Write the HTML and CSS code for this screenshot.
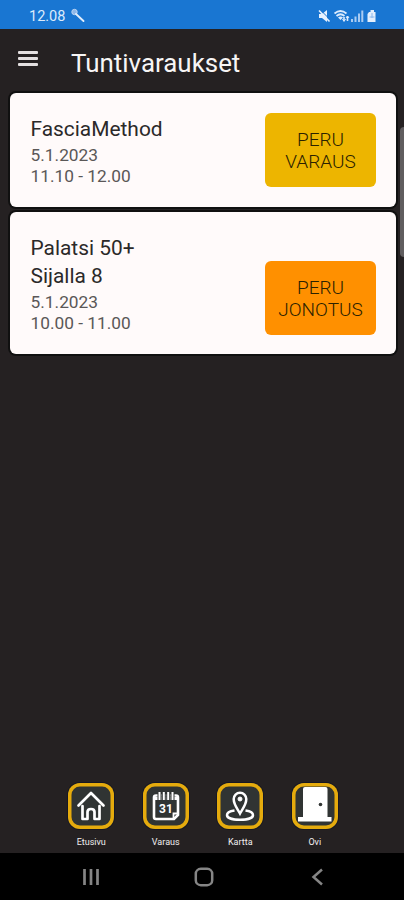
FILE: index.html
```html
<!DOCTYPE html>
<html lang="fi">
<head>
<meta charset="utf-8">
<title>Tuntivaraukset</title>
<link rel="stylesheet" href="styles.css">
</head>
<body>
<div class="phone">
  <div class="status">
    <span class="clock">12.08</span>
    <svg class="wand" width="16" height="16" viewBox="0 0 16 16"><circle cx="4.500" cy="4" r="2.700" fill="#8fb8e8" stroke="#b7d2f3"/><path d="M6 6l7.500 7" stroke="#e0edfc" stroke-width="1.900" stroke-linecap="round"/></svg>
    <svg class="signals" width="62" height="14" viewBox="0 0 62 14">
      <path d="M3 5h3l5-4v12L6 9H3z" fill="#e8f2ff"/><path d="M3.500 0l11 11" stroke="#1976d2" stroke-width="1"/><path d="M3 1.500l10.500 11" stroke="#e8f2ff" stroke-width="1.600"/>
      <path d="M18.500 4.500q6-5 12 0M20.500 7q4-3.500 8 0" fill="none" stroke="#dcebfd" stroke-width="1.700"/><path d="M22 8.500q2.500-2 5 0L24.500 11z" fill="#dcebfd"/><path d="M28 8v4M31.500 7v5" stroke="#dcebfd" stroke-width="1.600"/><path d="M26.500 10L28 12.500 29.500 10M30 9l1.500-2L33 9" fill="none" stroke="#dcebfd"/>
      <path d="M36 10v3M39.500 7.500V13M43 4.500V13M46.300 1.500V13" stroke="#a9cbf2" stroke-width="2"/>
      <path d="M53 3h1.500V1h3.500v2h1.500v10H51.500V5z" fill="#e3effd"/><path d="M56 4v5M53.500 8h5" stroke="#8ab8ed"/>
    </svg>
  </div>
  <header class="header">
    <div class="menu"><i></i><i></i><i></i></div>
    <h1>Tuntivaraukset</h1>
  </header>
  <main class="list">
    <section class="card">
      <div class="info">
        <h2>FasciaMethod</h2>
        <p class="date">5.1.2023</p>
        <p class="time">11.10 - 12.00</p>
      </div>
      <button class="cancel"><span>PERU</span><span>VARAUS</span></button>
    </section>
    <section class="card waiting">
      <div class="info">
        <h2 class="place">Palatsi 50+</h2>
        <h2 class="queue">Sijalla 8</h2>
        <p class="date">5.1.2023</p>
        <p class="time">10.00 - 11.00</p>
      </div>
      <button class="cancel orange"><span>PERU</span><span>JONOTUS</span></button>
    </section>
    <div class="edge-handle"></div>
  </main>
  <nav class="tabs">
    <a class="tab"><span class="tile"><svg width="46" height="46" viewBox="0 0 46 46" fill="none" stroke="#fff" stroke-width="2.700" stroke-linejoin="round" stroke-linecap="round"><path d="M10.500 22.500L23 10l12.500 12.500"/><path d="M14.500 23v13h5v-7q0-3 3.500-3t3.500 3v7h5V23"/></svg></span><span class="label">Etusivu</span></a>
    <a class="tab"><span class="tile"><svg width="46" height="46" viewBox="0 0 46 46" fill="none" stroke="#fff"><path d="M13 12.500h20q2 0 2 2V32l-4 4H13q-2 0-2-2V14.500q0-2 2-2z" stroke-width="2.600"/><path d="M11 15.500h24" stroke-width="3"/><path d="M16.500 9v8M20.800 9v8M25.200 9v8M29.500 9v8" stroke="#303433" stroke-width="4"/><path d="M16.500 9v8M20.800 9v8M25.200 9v8M29.500 9v8" stroke-width="2"/><path d="M30.500 35v-4.500H35" stroke-width="1.800"/><text x="23" y="29.500" text-anchor="middle" class="day">31</text></svg></span><span class="label">Varaus</span></a>
    <a class="tab"><span class="tile"><svg width="46" height="46" viewBox="0 0 46 46" fill="none" stroke="#fff" stroke-width="2.500"><path d="M17.500 27.500c-5 .8-7.500 2.500-7.500 4.500 0 3 5.500 4.800 13 4.800S36 35 36 32c0-2-2.500-3.700-7.500-4.500"/><path d="M23 30.500c-2-4-6.300-8.500-6.300-14.500a6.300 6.300 0 0 1 12.600 0C29.300 22 25 26.500 23 30.500z"/><circle cx="23" cy="16" r="2" fill="#fff" stroke-width="1"/></svg></span><span class="label">Kartta</span></a>
    <a class="tab"><span class="tile"><svg width="46" height="46" viewBox="0 0 46 46"><path d="M11 6q0-2 2-2h20.500q2 0 2 2v28H39.500v4.500H6V34h5z" fill="#fff"/><circle cx="28.500" cy="21.500" r="1.800" fill="#303433"/></svg></span><span class="label">Ovi</span></a>
  </nav>
  <footer class="system">
    <div class="key"><svg width="18" height="18" viewBox="0 0 18 18"><path d="M2.500 1v16M9 1v16M15.500 1v16" stroke="#858585" stroke-width="2.700"/></svg></div>
    <div class="key"><svg width="20" height="20" viewBox="0 0 20 20"><rect x="1.800" y="1.800" width="16.400" height="16.400" rx="5" fill="none" stroke="#858585" stroke-width="2.500"/></svg></div>
    <div class="key"><svg width="18" height="18" viewBox="0 0 18 18"><path d="M13 1.500L4.500 9l8.500 7.500" fill="none" stroke="#858585" stroke-width="2.500"/></svg></div>
  </footer>
</div>
</body>
</html>
```
FILE: styles.css
```css
* { box-sizing: border-box; }
body { margin: 0; background: #252122; font-family: Roboto, sans-serif; }
h1, h2, p { margin: 0; font-weight: 400; white-space: nowrap; }
.phone { width: 404px; height: 900px; display: flex; flex-direction: column; overflow: hidden; background: #252122; }
.status { height: 29px; flex: none; background: #1976d2; display: flex; align-items: center; padding: 3px 26px 0 29px; }
.clock { color: #dcebfc; font-size: 14.500px; }
.wand { margin-left: 5px; }
.signals { margin-left: auto; }
.header { height: 64px; flex: none; display: flex; padding-left: 18px; }
.menu { width: 20px; margin: 22px 33px 0 0; display: flex; flex-direction: column; gap: 3px; }
.menu i { height: 3px; background: #e4e0e1; border-radius: 1px; }
.header h1 { color: #f7f5f5; font-size: 25.900px; line-height: 32px; margin-top: 18px; }
.list { flex: 1; position: relative; display: flex; flex-direction: column; gap: 5px; padding: 0 8px 0 10px; }
.card { height: 114px; background: #fffafa; border-radius: 6px; display: flex; justify-content: space-between; padding: 20px 20px 0; box-shadow: 0 0 0 2px #101010; }
.card.waiting { height: 142px; }
.card h2 { color: #2b2929; font-size: 20.900px; line-height: 28px; margin: 2px 0 1px; padding-left: .5px; }
.card .place { margin-bottom: 0; }
.card .queue { margin-top: 0; }
.card p { color: #5a5757; font-size: 17.300px; line-height: 21px; padding-left: .6px; }
.card .date { margin-top: 2px; }
.cancel { width: 111px; height: 74px; flex: none; border: 0; border-radius: 6px; padding: 1px 0 0; background: #edb500; color: #2b2200; font: 300 19px/22px Roboto, sans-serif; display: flex; flex-direction: column; align-items: center; justify-content: center; }
.cancel.orange { margin-top: 28.500px; padding-top: 2px; background: #ff9000; }
.edge-handle { position: absolute; right: 0; top: 34px; width: 4px; height: 130px; background: #605d5f; border-radius: 4px 0 0 4px; }
.tabs { height: 70px; flex: none; display: flex; padding-left: 54px; }
.tab { width: 74.500px; display: flex; flex-direction: column; align-items: center; }
.tile { width: 46px; height: 46px; background: #303433; border-radius: 12px; display: block; box-shadow: inset 0 0 0 3.500px #e5ab0d, 0 0 0 1px #171822; }
.tile svg { display: block; }
.day { font: 700 12px Roboto, sans-serif; fill: #fff; stroke: none; }
.label { color: #f1efef; font-size: 9px; line-height: 12px; margin-top: 7px; }
.system { height: 47px; flex: none; background: #000; display: flex; justify-content: center; padding-left: 4px; }
.key { width: 113.500px; display: flex; align-items: center; justify-content: center; }
```
